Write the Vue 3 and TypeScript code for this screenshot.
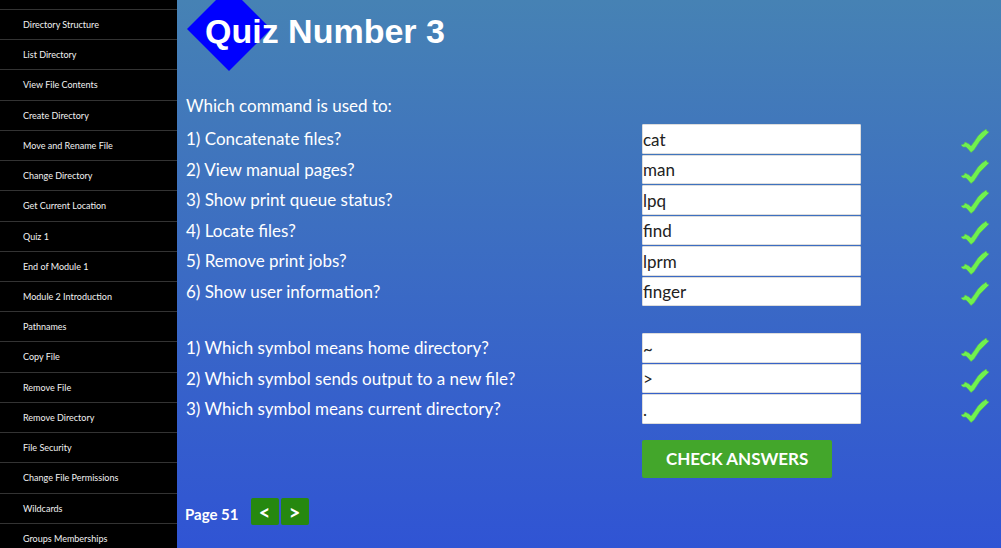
<script setup lang="ts">
import { reactive } from 'vue'

interface Question {
  id: string
  text: string
  answer: string
}

const lessons: string[] = [
  'Directory Structure', 'List Directory', 'View File Contents', 'Create Directory',
  'Move and Rename File', 'Change Directory', 'Get Current Location', 'Quiz 1',
  'End of Module 1', 'Module 2 Introduction', 'Pathnames', 'Copy File',
  'Remove File', 'Remove Directory', 'File Security', 'Change File Permissions',
  'Wildcards', 'Groups Memberships',
]

const commands = reactive<Question[]>([
  { id: 'c1', text: '1) Concatenate files?', answer: 'cat' },
  { id: 'c2', text: '2) View manual pages?', answer: 'man' },
  { id: 'c3', text: '3) Show print queue status?', answer: 'lpq' },
  { id: 'c4', text: '4) Locate files?', answer: 'find' },
  { id: 'c5', text: '5) Remove print jobs?', answer: 'lprm' },
  { id: 'c6', text: '6) Show user information?', answer: 'finger' },
])

const symbols = reactive<Question[]>([
  { id: 's1', text: '1) Which symbol means home directory?', answer: '~' },
  { id: 's2', text: '2) Which symbol sends output to a new file?', answer: '>' },
  { id: 's3', text: '3) Which symbol means current directory?', answer: '.' },
])

const groups = [
  { name: 'commands', questions: commands },
  { name: 'symbols', questions: symbols },
]
</script>

<template>
  <div class="page">
    <nav class="sidebar">
      <ul class="lessons">
        <li v-for="lesson in lessons" :key="lesson">
          <a href="#">{{ lesson }}</a>
        </li>
      </ul>
    </nav>
    <main class="content">
      <header class="title">
        <svg class="diamond" width="84" height="86" viewBox="0 0 84 86" aria-hidden="true">
          <path d="M42 1 84 43 42 85 0 43Z" fill="#00f" />
        </svg>
        <h1>Quiz Number 3</h1>
      </header>
      <p class="intro">Which command is used to:</p>
      <form class="quiz" @submit.prevent>
        <div v-for="group in groups" :key="group.name" class="group" :class="group.name">
          <div v-for="q in group.questions" :key="q.id" class="row">
            <label :for="q.id">{{ q.text }}</label>
            <input :id="q.id" v-model="q.answer" type="text" />
            <svg class="tick" width="30" height="26" viewBox="0 0 30 26" role="img" aria-label="Correct">
              <path
                d="M1 17 4 16 5 14 9 16 11 18 14 14 18 8 22 4 25 2 26 1 27 3 29 4 25 8 20 13 16 19 14 22 11 24.500 8 21 6 19 3 19Z"
                fill="#70f24e" stroke="#55b85c" stroke-width="0.6"
              />
            </svg>
          </div>
        </div>
        <div class="row">
          <button class="check" type="submit">CHECK ANSWERS</button>
        </div>
      </form>
      <footer class="pager">
        <span class="number">Page 51</span>
        <button type="button" aria-label="Previous page">&lt;</button>
        <button type="button" aria-label="Next page">&gt;</button>
      </footer>
    </main>
  </div>
</template>

<style>
body {
  margin: 0;
}
</style>

<style scoped>
.page {
  display: grid;
  grid-template-columns: 177px 1fr;
  height: 100vh;
  overflow: hidden;
  font-family: Lato, "Liberation Sans", sans-serif;
  font-size: 17px;
  line-height: 24px;
  color: #fff;
  text-rendering: optimizeLegibility;
}

.sidebar {
  display: flex;
  background: #000;
  min-height: 0;
}

.lessons {
  display: grid;
  grid-auto-rows: 1fr;
  flex: 1;
  margin: 9px 0 -5px;
  padding: 0;
  list-style: none;
}

.lessons li {
  display: flex;
  border-top: 1px solid #333;
}

.lessons a {
  flex: 1;
  padding: 9px 23px 0;
  font-size: 9px;
  line-height: 12px;
  color: #f2f2f2;
  text-decoration: none;
}

.content {
  padding: 0 12px 0 9px;
  background: linear-gradient(#4682b4, #3054d4);
}

.title {
  display: flex;
  align-items: center;
  height: 86px;
  margin-top: -14px;
  margin-left: 1px;
}

.diamond {
  flex: none;
  margin-right: -66px;
}

h1 {
  position: relative;
  margin: 0 0 -4px;
  font: bold 34px/40px "Liberation Sans", Arial, sans-serif;
}

.intro {
  margin: 22px 0 6px;
}

.group {
  display: grid;
  grid-auto-rows: 1fr;
}

.commands {
  height: 183px;
  margin-bottom: 26px;
}

.symbols {
  height: 92px;
  margin-bottom: 15px;
}

.row {
  display: grid;
  grid-template-columns: 456fr 219fr 128fr;
  align-items: stretch;
}

.row label {
  padding-top: 3px;
}

.row input {
  min-width: 0;
  box-sizing: border-box;
  margin: 0 0 1px;
  padding: 2px 0 0;
  border: 1px solid #ddd;
  border-radius: 1px;
  background: #fff;
  font: inherit;
  color: #222;
}

.tick {
  justify-self: end;
  margin: 4px -1px 0 0;
}

.check {
  grid-column: 2;
  justify-self: start;
  height: 38px;
  padding: 0 24px;
  border: 0;
  border-radius: 2px;
  background: #43a62b;
  font: bold 17px/24px Lato, "Liberation Sans", sans-serif;
  color: #fff;
  white-space: nowrap;
}

.pager {
  display: flex;
  gap: 2px;
  margin: 20px 0 0 -1px;
}

.number {
  margin: 4px 10px 0 0;
  font-size: 15px;
  font-weight: bold;
}

.pager button {
  width: 28px;
  height: 27px;
  padding: 0;
  border: 0;
  border-radius: 2px;
  background: #26880f;
  font: bold 20px/24px Lato, "Liberation Sans", sans-serif;
  color: #fff;
}
</style>
